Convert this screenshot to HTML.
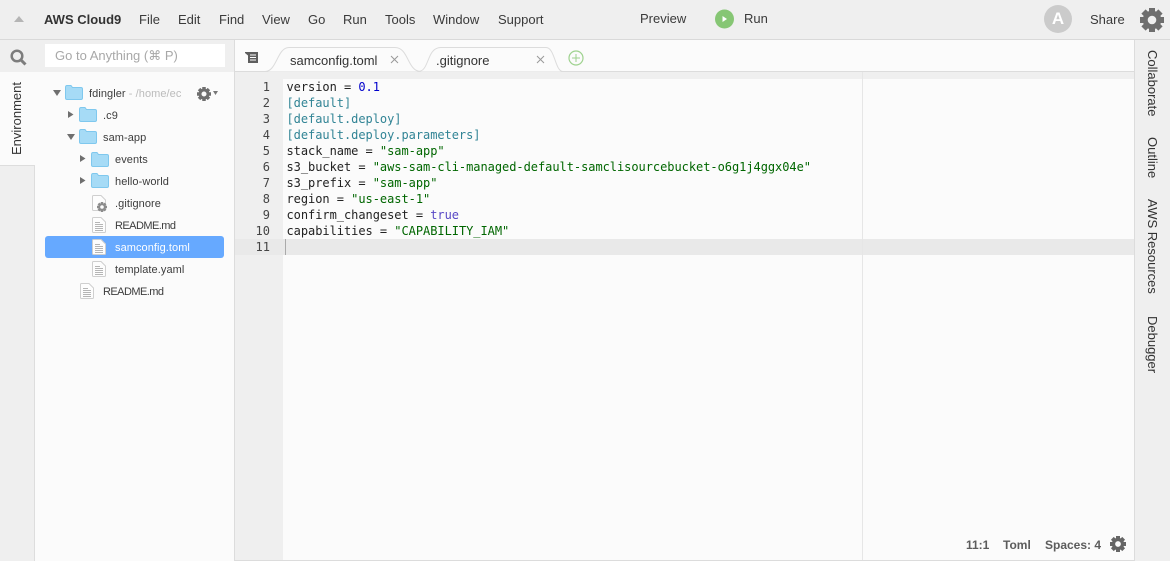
<!DOCTYPE html>
<html><head><meta charset="utf-8"><style>
html,body{margin:0;padding:0;width:1170px;height:561px;overflow:hidden;background:#fbfbfb}
body{position:relative;font-family:"Liberation Sans",sans-serif;color:#333;font-size:13px}
.a{position:absolute;white-space:nowrap}
.m{top:12px;line-height:16px;font-size:13px;color:#3a3a3a}
.t{line-height:16px;font-size:11px;letter-spacing:.07px;color:#3d3d3d}
.r{letter-spacing:-.55px}
.g{left:235px;width:35px;text-align:right;font:12px/16px "DejaVu Sans Mono",monospace;color:#444}
.c{left:286.500px;font:12px/16px "DejaVu Sans Mono",monospace;letter-spacing:-.04px;color:#222;white-space:pre}
.v{transform-origin:0 0;transform:rotate(90deg);font-size:13px;line-height:14px;color:#333}
.s{color:#060}.k{color:#318495}.n{color:#00c}.b{color:#5848c6}
svg{position:absolute;overflow:visible}
</style></head><body>
<svg width="0" height="0"><defs>
<symbol id="gear" viewBox="0 0 24 24"><circle cx="12" cy="12" r="6.800" fill="none" stroke="currentColor" stroke-width="5"/><g fill="currentColor"><rect x="9" y="0" width="6" height="5"/><rect x="9" y="19" width="6" height="5"/><rect x="0" y="9" width="5" height="6"/><rect x="19" y="9" width="5" height="6"/><rect x="9" y="0" width="6" height="5" transform="rotate(45 12 12)"/><rect x="9" y="19" width="6" height="5" transform="rotate(45 12 12)"/><rect x="0" y="9" width="5" height="6" transform="rotate(45 12 12)"/><rect x="19" y="9" width="5" height="6" transform="rotate(45 12 12)"/></g></symbol>
<symbol id="folder" viewBox="0 0 18 15"><path d="M.5 2.500Q.5 .5 2 .5H6L7.500 2.500H16Q17.500 2.500 17.500 4V13Q17.500 14.500 16 14.500H2Q.5 14.500 .5 13Z" fill="#a6dbf6" stroke="#7fc8ee"/></symbol>
<symbol id="file" viewBox="0 0 14 16"><path d="M.5 1.500Q.5 .5 1.500 .5H9L13.500 5V14.500Q13.500 15.500 12.500 15.500H1.500Q.5 15.500 .5 14.500Z" fill="#fdfdfd" stroke="#cfcfcf"/><path d="M3 5.500H8M3 7.500H11M3 9.500H11M3 11.500H11M3 13.500H11" stroke="#b5b5b5"/></symbol>
</defs></svg>

<!-- top bar -->
<div class="a" style="left:0;top:0;width:1170px;height:39px;background:#efefef;border-bottom:1px solid #d9d9d9"></div>
<svg style="left:14px;top:16px" width="10" height="7"><path d="M0 6L5 0L10 6Z" fill="#b5b5b5"/></svg>
<div class="a m" style="left:44px;font-weight:bold;color:#333">AWS Cloud9</div>
<div class="a m" style="left:139px">File</div>
<div class="a m" style="left:178px">Edit</div>
<div class="a m" style="left:219px">Find</div>
<div class="a m" style="left:262px">View</div>
<div class="a m" style="left:308px">Go</div>
<div class="a m" style="left:343px">Run</div>
<div class="a m" style="left:385px">Tools</div>
<div class="a m" style="left:433px">Window</div>
<div class="a m" style="left:498px">Support</div>
<div class="a m" style="left:640px;top:11px">Preview</div>
<svg style="left:715px;top:9px" width="20" height="20"><circle cx="9.500" cy="10" r="9.500" fill="#86c674"/><path d="M7.500 7L12 10L7.500 13Z" fill="#fff"/></svg>
<div class="a m" style="left:744px;top:11px">Run</div>
<div class="a" style="left:1044px;top:5px;width:28px;height:28px;border-radius:50%;background:#cbcbcb;color:#fff;font-size:17px;font-weight:bold;line-height:28px;text-align:center">A</div>
<div class="a m" style="left:1090px;top:12px">Share</div>
<svg style="left:1140px;top:8px;color:#6e6e6e" width="24" height="24"><use href="#gear"/></svg>

<!-- left column -->
<div class="a" style="left:0;top:40px;width:234px;height:32px;background:#efefef"></div>
<div class="a" style="left:0;top:72px;width:35px;height:489px;background:#fbfbfb"></div>
<div class="a" style="left:0;top:165px;width:34px;height:396px;background:#efefef;border-top:1px solid #ddd;border-right:1px solid #ddd"></div>
<div class="a" style="left:234px;top:40px;width:1px;height:521px;background:#dcdcdc"></div>
<svg style="left:10px;top:49px" width="17" height="17"><circle cx="7" cy="7" r="5.300" fill="none" stroke="#7d7d7d" stroke-width="2.500"/><path d="M11 11L15.500 15.500" stroke="#7d7d7d" stroke-width="3"/></svg>
<div class="a" style="left:45px;top:44px;width:180px;height:23px;background:#fff"></div>
<div class="a" style="left:55px;top:47px;font-size:13px;line-height:17px;color:#a8a8a8">Go to Anything (⌘ P)</div>
<div class="a" style="left:10px;top:155px;transform-origin:0 0;transform:rotate(-90deg);font-size:13px;line-height:14px;color:#333">Environment</div>

<!-- tree -->
<svg style="left:53px;top:90px" width="8" height="6"><path d="M0 0H8L4 6Z" fill="#6f6f6f"/></svg>
<svg style="left:65px;top:85px" width="18" height="15"><use href="#folder"/></svg>
<div class="a t" style="left:89px;top:86px">fdingler <span style="color:#bbb">- /home/ec</span></div>
<svg style="left:197px;top:87px;color:#6f6f6f" width="14" height="14"><use href="#gear"/></svg>
<svg style="left:213px;top:91px" width="5" height="4"><path d="M0 0H5L2.500 4Z" fill="#777"/></svg>
<svg style="left:68px;top:111px" width="6" height="7"><path d="M0 0L5.500 3.500L0 7Z" fill="#6f6f6f"/></svg>
<svg style="left:79px;top:107px" width="18" height="15"><use href="#folder"/></svg>
<div class="a t" style="left:103px;top:108px">.c9</div>
<svg style="left:67px;top:134px" width="8" height="6"><path d="M0 0H8L4 6Z" fill="#6f6f6f"/></svg>
<svg style="left:79px;top:129px" width="18" height="15"><use href="#folder"/></svg>
<div class="a t" style="left:103px;top:130px">sam-app</div>
<svg style="left:80px;top:155px" width="6" height="7"><path d="M0 0L5.500 3.500L0 7Z" fill="#6f6f6f"/></svg>
<svg style="left:91px;top:151.500px" width="18" height="15"><use href="#folder"/></svg>
<div class="a t" style="left:115px;top:152px">events</div>
<svg style="left:80px;top:177px" width="6" height="7"><path d="M0 0L5.500 3.500L0 7Z" fill="#6f6f6f"/></svg>
<svg style="left:91px;top:173px" width="18" height="15"><use href="#folder"/></svg>
<div class="a t" style="left:115px;top:174px">hello-world</div>
<svg style="left:92px;top:195px" width="14" height="16"><path d="M.5 1.500Q.5 .5 1.500 .5H9L13.500 5V14.500Q13.500 15.500 12.500 15.500H1.500Q.5 15.500 .5 14.500Z" fill="#fdfdfd" stroke="#cfcfcf"/></svg>
<svg style="left:97px;top:202px;color:#8c8c8c" width="10" height="10"><use href="#gear"/></svg>
<div class="a t" style="left:115px;top:196px">.gitignore</div>
<svg style="left:92px;top:217px" width="14" height="16"><use href="#file"/></svg>
<div class="a t r" style="left:115px;top:218px">README.md</div>
<div class="a" style="left:45px;top:236px;width:179px;height:22px;border-radius:3px;background:#66a9ff"></div>
<svg style="left:92px;top:239px" width="14" height="16"><use href="#file"/></svg>
<div class="a t" style="left:115px;top:240px;color:#fff">samconfig.toml</div>
<svg style="left:92px;top:261px" width="14" height="16"><use href="#file"/></svg>
<div class="a t" style="left:115px;top:262px">template.yaml</div>
<svg style="left:80px;top:283px" width="14" height="16"><use href="#file"/></svg>
<div class="a t r" style="left:103px;top:284px">README.md</div>

<!-- tabs -->
<div class="a" style="left:235px;top:40px;width:899px;height:31px;background:#fbfbfb;border-bottom:1px solid #dcdcdc"></div>
<svg style="left:245px;top:52px" width="14" height="11"><path d="M0 0H13V11H3V3.500L0 1Z" fill="#5e5e5e"/><path d="M5 3H11M5 5.500H11M5 8H11" stroke="#fff"/></svg>
<svg style="left:235px;top:40px" width="340" height="32"><path d="M30 31.500C42 31.500 42 7.500 54 7.500H160C174 7.500 172 31.500 186 31.500" fill="#fbfbfb" stroke="#dcdcdc"/><path d="M183 31.500C195 31.500 191 7.500 206 7.500H311C320 7.500 320 31.500 328 31.500" fill="#fbfbfb" stroke="#dcdcdc"/></svg>
<div class="a" style="left:290px;top:52px;font-size:13px;line-height:17px;color:#333">samconfig.toml</div>
<svg style="left:390px;top:55px" width="9" height="9"><path d="M1 1L8 8M8 1L1 8" stroke="#999"/></svg>
<div class="a" style="left:436px;top:52px;font-size:13px;line-height:17px;color:#333">.gitignore</div>
<svg style="left:536px;top:55px" width="9" height="9"><path d="M1 1L8 8M8 1L1 8" stroke="#999"/></svg>
<svg style="left:567.500px;top:50px" width="16" height="16"><circle cx="8" cy="8" r="7" fill="none" stroke="#9ed28e" stroke-width="1.200"/><path d="M8 4V12M4 8H12" stroke="#9ed28e"/></svg>

<!-- editor -->
<div class="a" style="left:235px;top:72px;width:899px;height:7px;background:#efefef"></div>
<div class="a" style="left:235px;top:72px;width:48px;height:488px;background:#efefef"></div>
<div class="a" style="left:235px;top:239px;width:899px;height:16px;background:#e9e9e9"></div>
<div class="a" style="left:862px;top:72px;width:1px;height:488px;background:#e6e6e6"></div>
<div class="a" style="left:285px;top:239px;width:1px;height:16px;background:#aaa"></div>
<div class="a" style="left:235px;top:560px;width:899px;height:1px;background:#dcdcdc"></div>
<div class="a" style="left:1134px;top:40px;width:1px;height:521px;background:#dcdcdc"></div>
<div class="a" style="left:1135px;top:40px;width:35px;height:521px;background:#efefef"></div>

<div class="a g" style="top:79px">1</div><div class="a g" style="top:95px">2</div><div class="a g" style="top:111px">3</div><div class="a g" style="top:127px">4</div><div class="a g" style="top:143px">5</div><div class="a g" style="top:159px">6</div><div class="a g" style="top:175px">7</div><div class="a g" style="top:191px">8</div><div class="a g" style="top:207px">9</div><div class="a g" style="top:223px">10</div><div class="a g" style="top:239px">11</div>

<div class="a c" style="top:79px">version = <span class="n">0.1</span></div>
<div class="a c k" style="top:95px">[default]</div>
<div class="a c k" style="top:111px">[default.deploy]</div>
<div class="a c k" style="top:127px">[default.deploy.parameters]</div>
<div class="a c" style="top:143px">stack_name = <span class="s">"sam-app"</span></div>
<div class="a c" style="top:159px">s3_bucket = <span class="s">"aws-sam-cli-managed-default-samclisourcebucket-o6g1j4ggx04e"</span></div>
<div class="a c" style="top:175px">s3_prefix = <span class="s">"sam-app"</span></div>
<div class="a c" style="top:191px">region = <span class="s">"us-east-1"</span></div>
<div class="a c" style="top:207px">confirm_changeset = <span class="b">true</span></div>
<div class="a c" style="top:223px">capabilities = <span class="s">"CAPABILITY_IAM"</span></div>

<!-- status -->
<div class="a" style="left:966px;top:537px;font-size:12px;line-height:16px;color:#5c5c5c;font-weight:bold">11:1</div>
<div class="a" style="left:1003px;top:537px;font-size:12px;line-height:16px;color:#5c5c5c;font-weight:bold">Toml</div>
<div class="a" style="left:1045px;top:537px;font-size:12px;line-height:16px;color:#5c5c5c;font-weight:bold">Spaces: 4</div>
<svg style="left:1110px;top:536px;color:#666" width="16" height="16"><use href="#gear"/></svg>

<!-- right labels -->
<div class="a v" style="left:1159px;top:50px">Collaborate</div>
<div class="a v" style="left:1159px;top:137px">Outline</div>
<div class="a v" style="left:1159px;top:199px">AWS Resources</div>
<div class="a v" style="left:1159px;top:316px">Debugger</div>
</body></html>
